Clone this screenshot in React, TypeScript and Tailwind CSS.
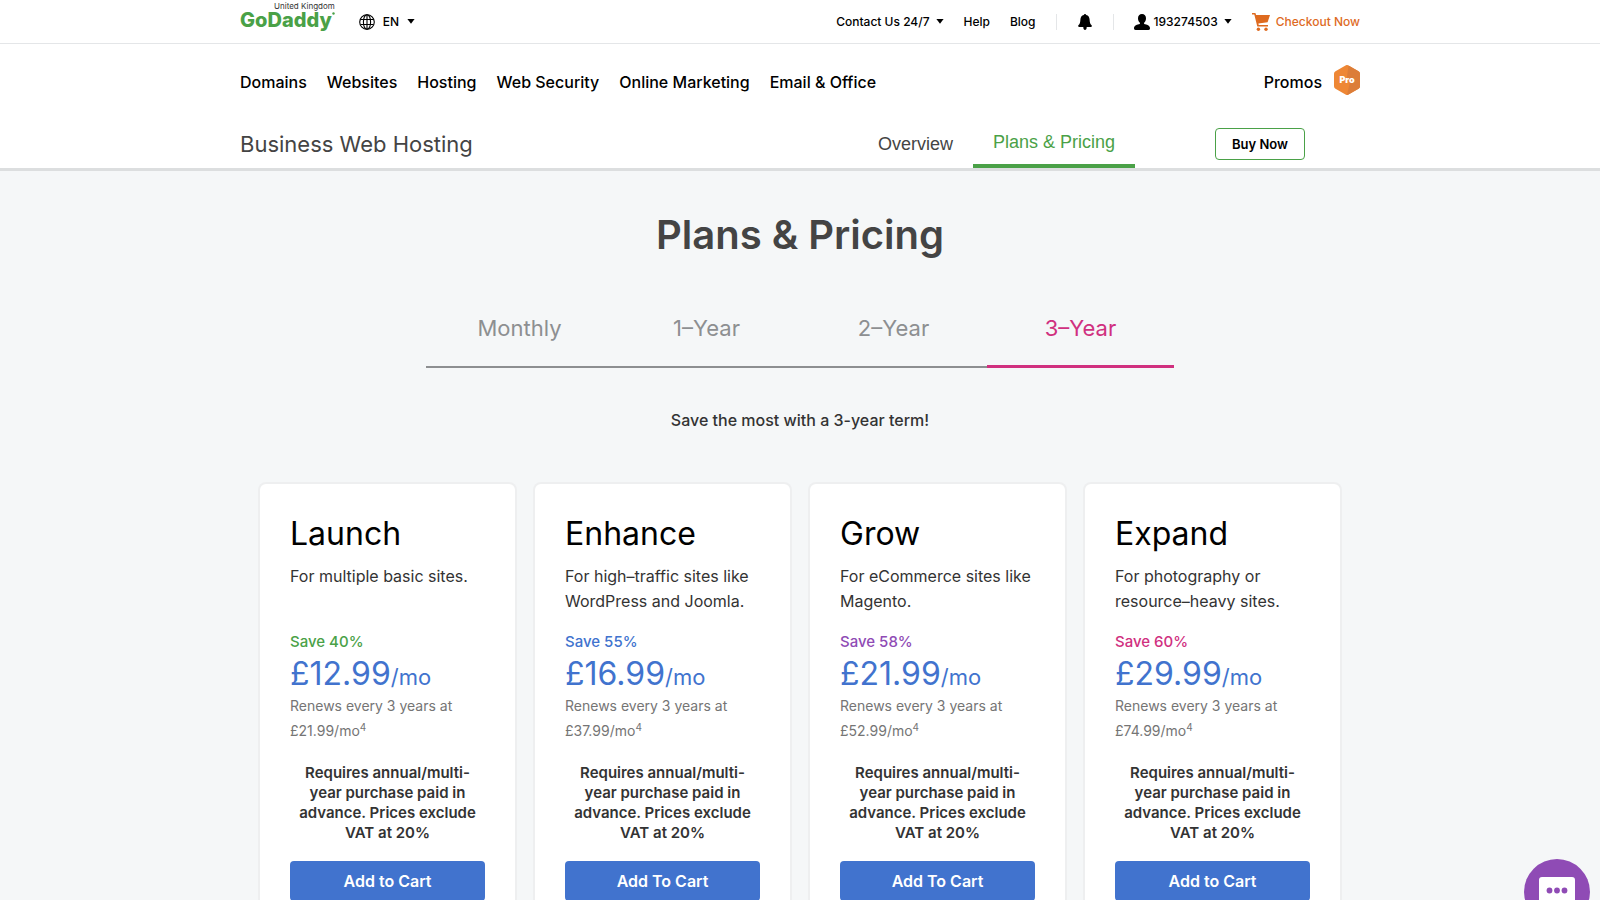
import { useState } from 'react'

const navLinks = ['Domains', 'Websites', 'Hosting', 'Web Security', 'Online Marketing', 'Email & Office']

const terms = ['Monthly', '1–Year', '2–Year', '3–Year']

const plans = [
  {
    name: 'Launch',
    description: 'For multiple basic sites.',
    save: 'Save 40%',
    saveColor: 'text-[#4aa147]',
    price: '£12.99',
    renewal: '£21.99/mo',
    button: 'Add to Cart',
  },
  {
    name: 'Enhance',
    description: 'For high–traffic sites like WordPress and Joomla.',
    save: 'Save 55%',
    saveColor: 'text-[#4173ce]',
    price: '£16.99',
    renewal: '£37.99/mo',
    button: 'Add To Cart',
  },
  {
    name: 'Grow',
    description: 'For eCommerce sites like Magento.',
    save: 'Save 58%',
    saveColor: 'text-[#8f4bb5]',
    price: '£21.99',
    renewal: '£52.99/mo',
    button: 'Add To Cart',
  },
  {
    name: 'Expand',
    description: 'For photography or resource–heavy sites.',
    save: 'Save 60%',
    saveColor: 'text-[#d0307f]',
    price: '£29.99',
    renewal: '£74.99/mo',
    button: 'Add to Cart',
  },
]

function Caret() {
  return (
    <svg className="w-2 h-[5px]" viewBox="0 0 8 5" fill="currentColor" aria-hidden="true">
      <path d="M.4 0h7.200L4 4.800z" />
    </svg>
  )
}

function GlobeIcon() {
  return (
    <svg className="w-4 h-4" viewBox="0 0 16 16" fill="none" stroke="currentColor" strokeWidth="1.1" aria-hidden="true">
      <circle cx="8" cy="8" r="7.3" />
      <ellipse cx="8" cy="8" rx="3.6" ry="7.3" />
      <path d="M8 .7v14.6M1.5 5.5h13M1.5 10.5h13" />
    </svg>
  )
}

function BellIcon() {
  return (
    <svg className="w-[14px] h-4" viewBox="0 0 14 16" fill="currentColor" aria-hidden="true">
      <path d="M7 0c.7 0 1.1.4 1.2 1 2.2.5 3.300 2.300 3.400 4.500.1 2.800.5 4.300 2 5.800.6.700.3 1.700-.7 1.700H1.100c-1 0-1.300-1-.7-1.700 1.500-1.500 1.900-3 2-5.800C2.500 3.300 3.600 1.500 5.800 1 5.900.4 6.300 0 7 0z" />
      <path d="M5.300 13h3.400C8.700 15.200 7.900 16 7 16s-1.700-.8-1.700-3z" />
    </svg>
  )
}

function UserIcon() {
  return (
    <svg className="w-4 h-4" viewBox="0 0 16 16" fill="currentColor" aria-hidden="true">
      <path d="M8 0c2.500 0 4 1.700 4 4.200 0 1.900-.8 3.700-1.900 4.600v1.300c2.600.6 5.900 1.400 5.900 4.200 0 1.100-.5 1.700-1.500 1.700h-13C.5 16 0 15.400 0 14.300c0-2.800 3.300-3.600 5.900-4.200V8.800C4.800 7.900 4 6.100 4 4.200 4 1.700 5.500 0 8 0z" />
    </svg>
  )
}

function CartIcon() {
  return (
    <svg className="w-[18px] h-[18px]" viewBox="0 0 18 18" fill="currentColor" aria-hidden="true">
      <path d="M0 0h3.400l.7 2H18l-2.400 7.200L6.400 10.600l.3 1.400h9.300v1.600H5.300L2.300 1.600H0z" />
      <circle cx="6.400" cy="16.200" r="1.700" />
      <circle cx="14" cy="16.200" r="1.700" />
    </svg>
  )
}

function ProBadge() {
  return (
    <svg className="w-[26px] h-[30px]" viewBox="0 0 26 30" role="img" aria-label="Pro">
      <path d="M11.500.4a3 3 0 0 1 3 0l10 5.800A3 3 0 0 1 26 8.800v12.400a3 3 0 0 1-1.500 2.600l-10 5.800a3 3 0 0 1-3 0l-10-5.800A3 3 0 0 1 0 21.200V8.800a3 3 0 0 1 1.500-2.600z" fill="#ee8735" />
      <path d="M14.500.4l10 5.800A3 3 0 0 1 26 8.800v12.400a3 3 0 0 1-1.500 2.600l-10 5.800L13 30l3-13-3-5z" fill="#dc7d38" />
      <text x="13" y="18" textAnchor="middle" fill="#fff" fontSize="9" fontWeight="900" fontFamily="Inter, sans-serif">Pro</text>
    </svg>
  )
}

function TopBar() {
  return (
    <div className="border-b border-[#e4e6e8]">
      <div className="mx-auto flex h-[43px] w-full max-w-[1120px] items-center justify-between text-xs font-medium text-black">
        <div className="flex h-full items-center">
          <a href="#" className="flex flex-col items-end self-start">
            <span className="text-[8px] leading-3 font-normal text-[#333]">United Kingdom</span>
            <span className="flex text-[20px] leading-4 font-extrabold text-[#4aa147]">
              GoDaddy
              <svg className="h-[3px] w-[3px]" viewBox="0 0 3 3" fill="currentColor" aria-hidden="true">
                <circle cx="1.500" cy="1.500" r="1.200" />
              </svg>
            </span>
          </a>
          <button className="ml-6 flex items-center gap-2">
            <GlobeIcon />
            EN
            <Caret />
          </button>
        </div>
        <div className="flex items-center">
          <button className="flex items-center gap-1.5">
            Contact Us 24/7
            <Caret />
          </button>
          <a href="#" className="ml-5">Help</a>
          <a href="#" className="ml-5">Blog</a>
          <button aria-label="Notifications" className="mx-5 border-x border-[#e4e6e8] px-[21px]">
            <BellIcon />
          </button>
          <button className="flex items-center gap-1.5">
            <span className="flex items-center gap-1">
              <UserIcon />
              193274503
            </span>
            <Caret />
          </button>
          <a href="#" className="ml-5 flex items-center gap-1.5 text-[#de6a1f]">
            <CartIcon />
            Checkout Now
          </a>
        </div>
      </div>
    </div>
  )
}

function PlanCard({ plan }: { plan: (typeof plans)[number] }) {
  return (
    <article className="rounded-md bg-white px-[30px] pt-[30px] pb-10 ring-2 ring-[#eeeff0]">
      <h2 className="text-[32px] leading-10 text-black">{plan.name}</h2>
      <p className="mt-2.5 min-h-[50px] text-base leading-[25px] text-[#333]">{plan.description}</p>
      <p className={`mt-4 text-[15px] leading-6 font-medium ${plan.saveColor}`}>{plan.save}</p>
      <p className="-mb-1 text-[32px] leading-10 text-[#4173ce]">
        {plan.price}
        <span className="text-[22px]">/mo</span>
      </p>
      <p className="text-sm leading-[25px] text-[#757575]">
        Renews every 3 years at {plan.renewal}
        <sup className="text-[10px]">4</sup>
      </p>
      <p className="mt-5 text-center text-[15px] leading-5 font-semibold text-[#333]">
        Requires annual/multi-year purchase paid in advance. Prices exclude VAT at 20%
      </p>
      <button className="mt-[18px] h-10 w-full rounded-sm bg-[#4173ce] text-base font-semibold text-white">
        {plan.button}
      </button>
    </article>
  )
}

export default function App() {
  const [term, setTerm] = useState('3–Year')

  return (
    <div className="h-screen overflow-hidden bg-[#f5f7f8] font-['Inter',sans-serif]">
      <header className="border-b-3 border-[#dcdedf] bg-white">
        <TopBar />

        {/* Main navigation */}
        <nav className="mx-auto flex h-[76px] w-full max-w-[1120px] items-center justify-between text-base font-medium text-black">
          <div className="flex gap-5">
            {navLinks.map(link => (
              <a key={link} href="#">{link}</a>
            ))}
          </div>
          <div className="flex items-center gap-3">
            <a href="#">Promos</a>
            <a href="#" className="pb-1"><ProBadge /></a>
          </div>
        </nav>

        {/* Product bar */}
        <div className="mx-auto flex h-12 w-full max-w-[1120px] items-center justify-between">
          <p className="text-[22px] text-[#444]">Business Web Hosting</p>
          <div className="flex h-full items-center pr-[55px] font-['Liberation_Sans',sans-serif] text-lg">
            <a href="#" className="mr-5 text-[#444]">Overview</a>
            <a href="#" className="flex h-full items-center border-b-4 border-[#4aa147] px-5 text-[#4aa147]">
              Plans &amp; Pricing
            </a>
            <button className="ml-20 h-8 rounded-sm border border-[#4aa147] px-4 font-['Inter',sans-serif] text-[13px] font-semibold text-black">
              Buy Now
            </button>
          </div>
        </div>
      </header>

      <main className="mx-auto w-full max-w-[1080px] pt-10">
        <h1 className="text-center text-[40px] leading-[48px] font-semibold text-[#444]">Plans &amp; Pricing</h1>

        {/* Billing term */}
        <div role="tablist" className="mx-auto mt-7 grid max-w-[748px] grid-cols-4">
          {terms.map(t => (
            <button
              key={t}
              role="tab"
              aria-selected={t === term}
              onClick={() => setTerm(t)}
              className={
                t === term
                  ? 'h-[81px] border-b-3 border-[#d0307f] pt-1 text-[22px] text-[#d0307f]'
                  : 'h-[81px] border-b-2 border-[#8d8f91] pt-1 text-[22px] text-[#8d8f91]'
              }
            >
              {t}
            </button>
          ))}
        </div>

        <p className="mt-10 text-center text-base leading-6 font-medium text-[#333]">
          Save the most with a 3-year term!
        </p>

        <div className="mt-[52px] grid grid-cols-4 gap-5">
          {plans.map(plan => (
            <PlanCard key={plan.name} plan={plan} />
          ))}
        </div>
      </main>

      <button
        aria-label="Open chat"
        className="fixed right-[10px] -bottom-[25px] h-[66px] w-[66px] rounded-full bg-[#8f4bb5]"
      >
        <svg viewBox="0 0 66 66" aria-hidden="true">
          <path d="M18 18h30a3 3 0 0 1 3 3v29l-8-6H18a3 3 0 0 1-3-3V21a3 3 0 0 1 3-3z" fill="#fff" />
          <g fill="#8f4bb5">
            <circle cx="25.500" cy="31.500" r="2.900" />
            <circle cx="33" cy="31.500" r="2.900" />
            <circle cx="40.500" cy="31.500" r="2.900" />
          </g>
        </svg>
      </button>
    </div>
  )
}
